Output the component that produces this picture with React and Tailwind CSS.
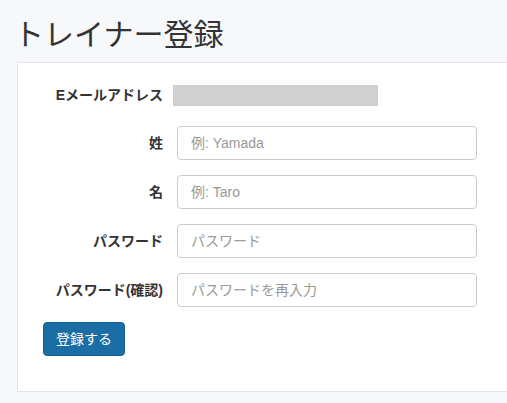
export default function App() {
  const rows = [
    { label: "姓", placeholder: "例: Yamada", type: "text" },
    { label: "名", placeholder: "例: Taro", type: "text" },
    { label: "パスワード", placeholder: "パスワード", type: "password" },
    { label: "パスワード(確認)", placeholder: "パスワードを再入力", type: "password" },
  ];

  return (
    <div className="min-h-screen overflow-hidden bg-[#f7f8fa] font-['Liberation_Sans','Noto_Sans_CJK_JP',sans-serif] text-[#333]">
      <h1 className="pl-[14px] pt-[15px] text-[30px] leading-[40px] font-normal">トレイナー登録</h1>
      <div className="mt-[7px] ml-[17px] w-[520px] border border-[#e3e5e8] bg-white pl-[25px] pt-[22px] pb-[35px]">
        <div className="flex items-end">
          <div className="w-[120px] pb-[1px] text-right text-[14px] font-bold leading-[20px]">Eメールアドレス</div>
          <div className="ml-[10px] h-[21px] w-[205px] bg-[#d0d0d0]" />
        </div>
        <div className="mt-[20px] flex flex-col gap-[15px]">
          {rows.map((r) => (
            <div key={r.label} className="flex items-center">
              <label className="w-[120px] text-right text-[14px] font-bold leading-[20px]">{r.label}</label>
              <input
                type={r.type}
                placeholder={r.placeholder}
                className="ml-[14px] h-[34px] w-[300px] rounded-[4px] border border-[#ccc] px-[13px] text-[14px] outline-none placeholder:text-[#999]"
              />
            </div>
          ))}
        </div>
        <button className="mt-[15px] h-[34px] w-[82px] rounded-[4px] border border-[#195f92] bg-[#1b6da6] text-[14px] text-white">
          登録する
        </button>
      </div>
    </div>
  );
}
